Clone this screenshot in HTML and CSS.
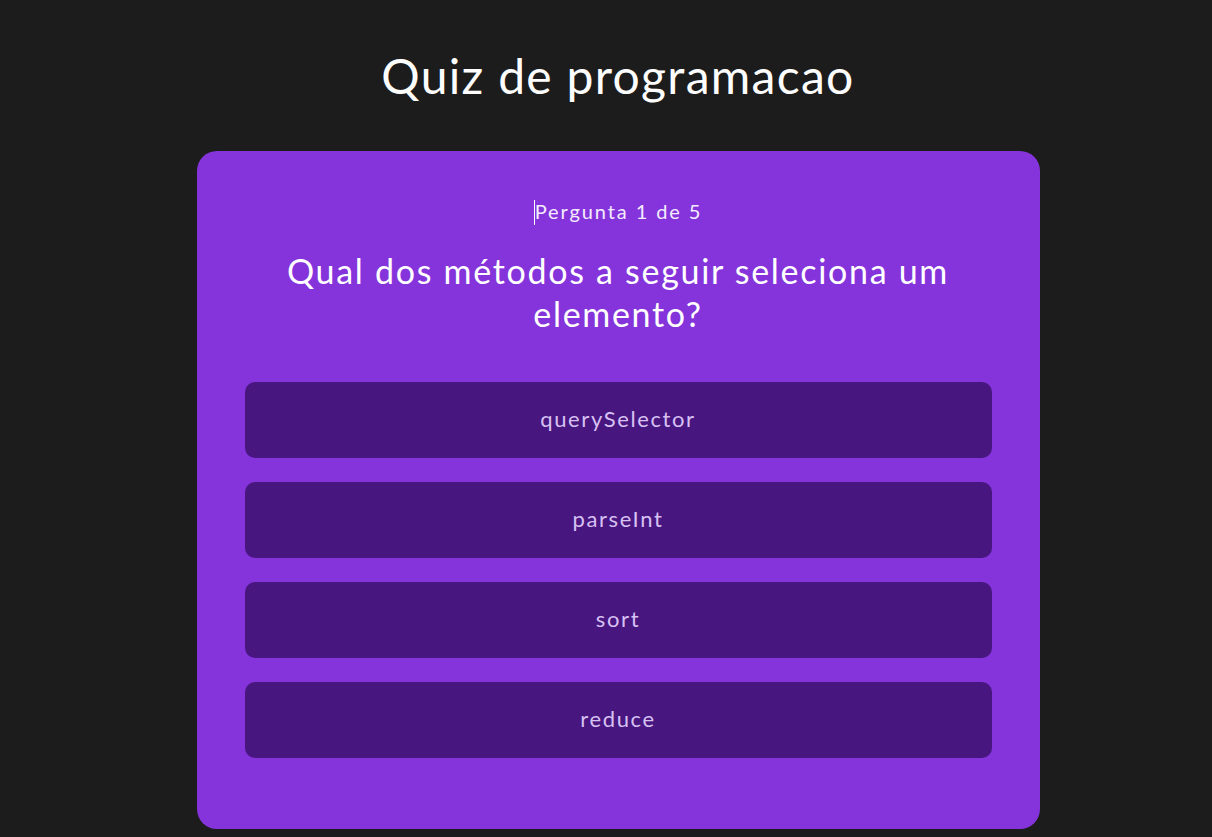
FILE: index.html
```html
<!DOCTYPE html>
<html lang="pt">
<head>
<meta charset="utf-8">
<title>Quiz de programacao</title>
<link rel="stylesheet" href="styles.css">
</head>
<body>
<main class="page">
  <h1 class="title">Quiz de programacao</h1>
  <section class="card">
    <p class="counter"><span class="caret"></span>Pergunta 1 de 5</p>
    <h2 class="question">Qual dos métodos a seguir seleciona um elemento?</h2>
    <div class="answers">
      <button class="answer">querySelector</button>
      <button class="answer">parseInt</button>
      <button class="answer">sort</button>
      <button class="answer">reduce</button>
    </div>
  </section>
</main>
</body>
</html>
```

FILE: styles.css
```css
* { box-sizing: border-box; }

html, body {
  margin: 0;
  padding: 0;
  background: #1c1c1c;
  height: 100%;
  overflow: hidden;
}

body {
  font-family: Lato, "Open Sans", sans-serif;
  color: #ffffff;
}

.page {
  display: flex;
  flex-direction: column;
  align-items: center;
  padding-left: 24px;
}

.title {
  margin: 47px 0 46px;
  font-size: 48px;
  line-height: 58px;
  font-weight: 400;
  letter-spacing: 1.3px;
  color: #fdfdfd;
}

.card {
  width: 843px;
  background: #8534dc;
  border-radius: 20px;
  padding: 47px 48px 71px;
  display: flex;
  flex-direction: column;
  align-items: stretch;
}

.counter {
  margin: 0;
  text-align: center;
  font-size: 20px;
  line-height: 26px;
  font-weight: 400;
  letter-spacing: 1.9px;
  color: #f4ecfd;
}

.caret {
  display: inline-block;
  width: 1px;
  height: 25px;
  vertical-align: -6px;
  background: #ffffff;
}

.question {
  margin: 24px 10px 47px;
  text-align: center;
  font-size: 34px;
  line-height: 43px;
  font-weight: 400;
  letter-spacing: 1.7px;
  color: #ffffff;
}

.answers {
  display: flex;
  flex-direction: column;
  gap: 24.5px;
}

.answer {
  height: 75.5px;
  padding: 0 0 3px;
  border: none;
  border-radius: 10px;
  background: #48167f;
  color: #d7c1f3;
  font-family: inherit;
  font-size: 22px;
  font-weight: 400;
  letter-spacing: 1.6px;
  cursor: pointer;
}
```
